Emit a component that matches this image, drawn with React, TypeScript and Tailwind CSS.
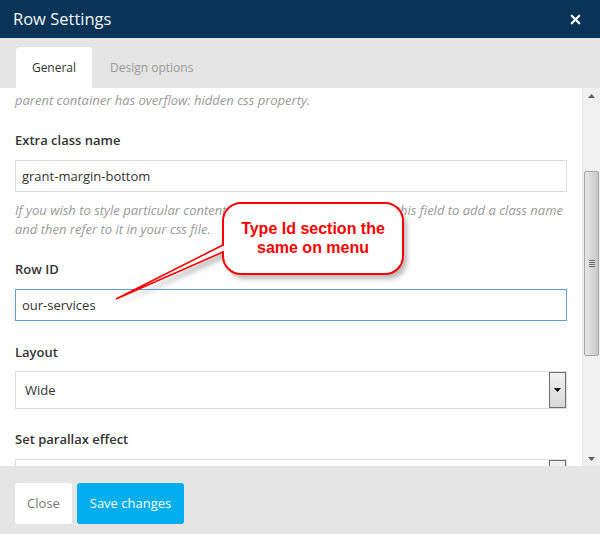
import { X } from 'lucide-react'

function Scrollbar() {
  return (
    <div className="flex w-[18px] flex-col bg-[#f0f0f0] border-l border-[#e8e8e8]">
      <div className="flex h-[16px] shrink-0 items-center justify-center">
        <svg width="7" height="4" viewBox="0 0 7 4"><path d="M0 4 L3.5 0 L7 4 Z" fill="#606060" /></svg>
      </div>
      <div className="mx-[1px] mt-[67px] flex h-[185px] shrink-0 items-center justify-center rounded-[2px] border border-[#a8a8a8] bg-gradient-to-r from-[#e8e8e8] via-[#d8d8d8] to-[#c8c8c8]">
        <div className="flex flex-col gap-[1px]">
          <div className="h-[1px] w-[6px] bg-[#707070]" />
          <div className="h-[1px] w-[6px] bg-[#707070]" />
          <div className="h-[1px] w-[6px] bg-[#707070]" />
          <div className="h-[1px] w-[6px] bg-[#707070]" />
        </div>
      </div>
      <div className="flex-1" />
      <div className="flex h-[14px] shrink-0 items-center justify-center">
        <svg width="7" height="4" viewBox="0 0 7 4"><path d="M0 0 L3.5 4 L7 0 Z" fill="#606060" /></svg>
      </div>
    </div>
  )
}

function SelectBox({ value }: { value: string }) {
  return (
    <div className="flex h-[38px] shrink-0 items-stretch border border-[#dddddd] bg-white">
      <div className="flex flex-1 items-center pl-[9px] pt-[2px] text-[13px] text-[#333]">{value}</div>
      <div className="flex w-[17px] items-center justify-center border border-[#707070] bg-gradient-to-b from-[#f2f2f2] to-[#d8d8d8]">
        <svg width="7" height="4" viewBox="0 0 7 4"><path d="M0 0 L3.5 4 L7 0 Z" fill="#000" /></svg>
      </div>
    </div>
  )
}

function Callout() {
  return (
    <div className="pointer-events-none absolute left-0 top-0 h-[534px] w-[600px]">
      <svg width="600" height="534" className="absolute left-0 top-0">
        <defs>
          <filter id="sh" x="-20%" y="-20%" width="140%" height="140%">
            <feGaussianBlur stdDeviation="2.5" />
          </filter>
        </defs>
        <g transform="translate(4 5)" filter="url(#sh)" opacity="0.55">
          <rect x="223" y="203" width="180" height="71" rx="18" fill="#808080" />
          <path d="M223 245 L116 299 L223 252 Z" fill="#808080" />
        </g>
        <path d="M224 245 L116 299 L224 252 Z" fill="#fff" />
        <rect x="223" y="203" width="180" height="71" rx="18" fill="#fff" stroke="#ff0000" strokeWidth="2" />
        <rect x="220" y="246" width="6" height="5" fill="#fff" />
        <path d="M223 245 L116 299 L223 252" fill="none" stroke="#ff0000" strokeWidth="1.6" strokeLinejoin="miter" />
      </svg>
      <div className="absolute left-[223px] top-[219px] w-[180px] text-center font-['Liberation_Sans',Arial,sans-serif] text-[16px] font-bold leading-[19px] text-[#ff0000]">
        Type Id section the
        <br />
        same on menu
      </div>
    </div>
  )
}

export default function App() {
  return (
    <div className="relative flex h-[534px] w-[600px] flex-col overflow-hidden bg-[#e5e5e5] font-['Open_Sans',sans-serif]">
      <div className="flex h-[38px] shrink-0 items-center justify-between bg-[#0a3358] pl-[13px] pr-[17px]">
        <span className="text-[16.5px] text-[#f4f6f8]">Row Settings</span>
        <X size={15} strokeWidth={3.5} className="text-white" />
      </div>

      <div className="flex h-[50px] shrink-0 items-end pl-[16px] pr-[18px]">
        <div className="flex h-[41px] w-[76px] items-center justify-center rounded-t-[4px] bg-white text-[12px] text-[#333]">
          General
        </div>
        <div className="flex h-[41px] items-center pl-[18px] text-[12px] text-[#999]">Design options</div>
      </div>

      <div className="flex h-[378px] shrink-0 bg-white">
        <div className="flex flex-1 flex-col overflow-hidden pl-[15px] pr-[15px] pt-[2px]">
          <p className="shrink-0 text-[13px] italic leading-[20px] text-[#999]">parent container has overflow: hidden css property.</p>

          <div className="mt-[20px] shrink-0 text-[13px] font-semibold leading-[20px] text-[#333]">Extra class name</div>
          <div className="mt-[10px] flex h-[32px] shrink-0 items-center border border-[#dddddd] pl-[6px] pt-[2px] text-[13px] text-[#333]">
            grant-margin-bottom
          </div>
          <p className="mt-[9px] shrink-0 text-[13px] italic leading-[19px] text-[#999]">
            If you wish to style particular content element differently, then use this field to add a class name and then refer to it in your css file.
          </p>

          <div className="mt-[20px] shrink-0 text-[13px] font-semibold leading-[20px] text-[#333]">Row ID</div>
          <div className="mt-[10px] flex h-[32px] shrink-0 items-center border border-[#5b9dd9] pl-[6px] pt-[2px] text-[13px] text-[#333]">
            our-services
          </div>

          <div className="mt-[21px] shrink-0 text-[13px] font-semibold leading-[20px] text-[#333]">Layout</div>
          <div className="mt-[9px] shrink-0">
            <SelectBox value="Wide" />
          </div>

          <div className="mt-[20px] shrink-0 text-[13px] font-semibold leading-[20px] text-[#333]">Set parallax effect</div>
          <div className="mt-[10px] shrink-0">
            <SelectBox value="" />
          </div>
        </div>
        <Scrollbar />
      </div>

      <div className="flex flex-1 items-start gap-[5px] pl-[15px] pt-[17px]">
        <button className="flex h-[41px] w-[57px] items-center justify-center rounded-[3px] bg-white text-[13px] text-[#777]">
          Close
        </button>
        <button className="flex h-[41px] w-[107px] items-center justify-center rounded-[3px] bg-[#00aeef] text-[13px] text-white">
          Save changes
        </button>
      </div>

      <Callout />
    </div>
  )
}
